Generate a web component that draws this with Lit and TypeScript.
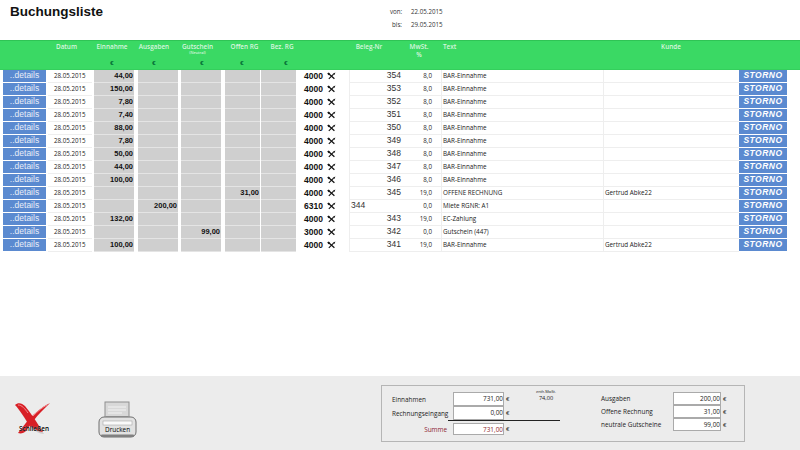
import { LitElement, html, css, svg } from "lit";
import { customElement } from "lit/decorators.js";

type Row = { e?: string; a?: string; g?: string; o?: string; code: string; nr: string; left?: boolean; mw: string; text: string; kunde?: string };
const rows: Row[] = [
  { e: "44,00", code: "4000", nr: "354", mw: "8,0", text: "BAR-Einnahme" },
  { e: "150,00", code: "4000", nr: "353", mw: "8,0", text: "BAR-Einnahme" },
  { e: "7,80", code: "4000", nr: "352", mw: "8,0", text: "BAR-Einnahme" },
  { e: "7,40", code: "4000", nr: "351", mw: "8,0", text: "BAR-Einnahme" },
  { e: "88,00", code: "4000", nr: "350", mw: "8,0", text: "BAR-Einnahme" },
  { e: "7,80", code: "4000", nr: "349", mw: "8,0", text: "BAR-Einnahme" },
  { e: "50,00", code: "4000", nr: "348", mw: "8,0", text: "BAR-Einnahme" },
  { e: "44,00", code: "4000", nr: "347", mw: "8,0", text: "BAR-Einnahme" },
  { e: "100,00", code: "4000", nr: "346", mw: "8,0", text: "BAR-Einnahme" },
  { o: "31,00", code: "4000", nr: "345", mw: "19,0", text: "OFFENE RECHNUNG", kunde: "Gertrud Abke22" },
  { a: "200,00", code: "6310", nr: "344", left: true, mw: "0,0", text: "Miete  RGNR: A1" },
  { e: "132,00", code: "4000", nr: "343", mw: "19,0", text: "EC-Zahlung" },
  { g: "99,00", code: "3000", nr: "342", mw: "0,0", text: "Gutschein (447)" },
  { e: "100,00", code: "4000", nr: "341", mw: "19,0", text: "BAR-Einnahme", kunde: "Gertrud Abke22" },
];

const tools = svg`<svg class="tools" viewBox="0 0 9 8" width="9" height="8"><path d="M2 2 L7.4 6.8" stroke="#111" stroke-width="1.2" fill="none"/><path d="M6.6 2.2 L1.8 6.8" stroke="#111" stroke-width="1.1" fill="none"/><path d="M0.2 1.6 L1.8 0.6 L3.2 2 L1.6 3.2 Z" fill="#111"/><path d="M5.8 1.8 L8.4 0.6 L7.4 3 Z" fill="#111"/></svg>`;

@customElement("app-root")
export class AppRoot extends LitElement {
  static styles = css`
    :host {
      display: flex;
      flex-direction: column;
      width: 800px;
      height: 450px;
      overflow: hidden;
      background: #fff;
      font-family: "Open Sans", "Noto Sans", sans-serif;
      --cols: 46px 46px 42px 44px 43px 39px 36px 31px 10px 12px 54px 38px 162px 136px 48px;
    }
    .top { height: 40px; display: flex; flex: none; }
    h1 { margin: 4px 0 0 10px; width: 380px; font: bold 13.5px/16px "Liberation Sans", sans-serif; color: #111; }
    .dates { margin-top: 7px; display: grid; grid-template-columns: 12px auto; column-gap: 9px; row-gap: 4px; font-size: 6.2px; line-height: 9px; color: #333; align-content: start; white-space: nowrap; }
    .dates span:nth-child(odd) { text-align: right; }
    .head { flex: none; height: 30px; background: #3ad964; border-top: 1px solid #2fc455; border-bottom: 1px solid #34cf5c; box-sizing: border-box; display: grid; grid-template-columns: var(--cols); color: #d8f6df; font-size: 6.4px; font-weight: 600; line-height: 8px; text-align: center; }
    .head > div { padding-top: 2px; display: flex; flex-direction: column; align-items: center; white-space: nowrap; }
    .head small { font-size: 3.8px; line-height: 4px; }
    .head b { color: #063; font: bold 6px/8px "Liberation Sans", sans-serif; margin-top: auto; margin-bottom: 2px; }
    .head .hd { padding-right: 5px; }
    .head .he { padding-right: 2px; }
    .head .ha { padding-right: 4px; }
    .head .hg { padding-right: 4px; }
    .head .hg b { padding-left: 9px; }
    .head .ho { padding-left: 8px; }
    .head .ho b { padding-right: 5px; }
    .head .hb { padding-left: 8px; }
    .head .hb b { padding-left: 8px; }
    .head .hn { padding-right: 14px; }
    .head .hm { padding-right: 6px; }
    .head .htx { align-items: flex-start; padding-left: 2px; }
    .list { flex: none; height: 182px; }
    .row { height: 13px; display: grid; grid-template-columns: var(--cols); }
    .row > * { box-sizing: border-box; min-width: 0; white-space: nowrap; }
    .det { margin-left: 3px; background: #5b8ad0; color: #e8eef8; font: 8.5px/11px "Liberation Sans", sans-serif; text-align: center; border-bottom: 1px solid #fff; }
    .date { margin-left: 2px; font-size: 6.2px; line-height: 11px; padding-left: 6px; color: #222; border-bottom: 1px solid #eee; }
    .num { background: #cfcfcf; font: bold 7.5px/11px "Liberation Sans", sans-serif; text-align: right; padding-right: 1px; color: #111; border-bottom: 1px solid #e4e4e4; }
    .c-e { margin-left: 2px; }
    .c-a { margin-left: 4px; }
    .c-g { margin-left: 3px; }
    .c-o { margin-left: 4px; }
    .c-b { margin-left: 1px; }
    .code { font: bold 8.5px/12px "Liberation Sans", sans-serif; color: #111; padding-left: 8px; }
    .ic { padding-top: 2px; }
    .tools { display: block; }
    .nr { font: 8.5px/11px "Liberation Sans", sans-serif; color: #333; text-align: right; padding-right: 2px; border-bottom: 1px solid #eee; border-left: 1px solid #eee; }
    .nr.left { text-align: left; padding-left: 1px; }
    .mw { font-size: 6.2px; line-height: 11px; text-align: right; color: #222; padding-right: 9px; border-bottom: 1px solid #eee; }
    .tx, .ku { font-size: 6.3px; line-height: 11px; color: #222; padding-left: 1px; border-bottom: 1px solid #eee; border-left: 1px solid #eee; }
    .st { background: #5b8ad0; color: #fff; font: italic bold 8.5px/11px "Liberation Sans", sans-serif; letter-spacing: 0.5px; text-align: center; border-bottom: 1px solid #fff; }
    .spacer { flex: 1; }
    .foot { flex: none; height: 74px; background: #ececec; display: flex; position: relative; }
    .close { margin: 26px 0 0 14px; width: 38px; height: 34px; position: relative; flex: none; }
    .close svg { display: block; }
    .close span, .print span { position: absolute; font-size: 6.4px; line-height: 8px; color: #000; white-space: nowrap; }
    .close span { left: 5px; top: 23px; font-weight: 600; text-shadow: 0 0 1px rgba(255, 255, 255, 0.8); }
    .print { margin: 25px 0 0 46px; width: 40px; height: 38px; position: relative; flex: none; }
    .print span { left: 7px; top: 25px; }
    .panel { margin: 9px 0 0 243px; width: 364px; height: 57px; box-sizing: border-box; border: 1px solid #b5b5b5; padding: 6px 0 0 10px; display: flex; font-size: 6.4px; color: #222; flex: none; position: relative; }
    .block-l { display: grid; grid-template-columns: 61px 51px 10px; grid-template-rows: 14px 14px 12px; row-gap: 0; align-items: center; }
    .block-l .lab.sum { margin-top: 6px; }
    .block-l .val.sum, .block-l .eu.s { margin-top: 6px; }
    .block-r { margin-left: 87px; display: grid; grid-template-columns: 72px 48px 10px; grid-template-rows: 13px 13px 13px; align-items: center; }
    .lab { white-space: nowrap; }
    .val { background: #fff; border: 1px solid #aaa; height: 100%; box-sizing: border-box; text-align: right; line-height: 11px; }
    .eu { font-size: 6px; padding-left: 2px; }
    .mw2 { position: absolute; left: 144px; top: 3px; width: 40px; text-align: center; font-size: 5.6px; line-height: 8px; }
    .mw2 small { font-size: 3.8px; display: block; line-height: 5px; }
    .sum { color: #8c1c2c; }
    .lab.sum { text-align: right; padding-right: 6px; }
    .rule { position: absolute; left: 66px; top: 34px; width: 112px; height: 1px; background: #222; }
  `;

  private num(cls: string, v?: string) {
    return html`<div class="num ${cls}">${v ?? ""}</div>`;
  }

  render() {
    return html`
      <div class="top">
        <h1>Buchungsliste</h1>
        <div class="dates"><span>von:</span><span>22.05.2015</span><span>bis:</span><span>29.05.2015</span></div>
      </div>
      <div class="head">
        <div></div>
        <div class="hd">Datum</div>
        <div class="he">Einnahme<b>€</b></div>
        <div class="ha">Ausgaben<b>€</b></div>
        <div class="hg">Gutschein<small>(Neutral)</small><b>€</b></div>
        <div class="ho">Offen RG<b>€</b></div>
        <div class="hb">Bez. RG<b>€</b></div>
        <div></div><div></div><div></div>
        <div class="hn">Beleg-Nr</div>
        <div class="hm">MwSt.<span>%</span></div>
        <div class="htx">Text</div>
        <div>Kunde</div>
        <div></div>
      </div>
      <div class="list">
        ${rows.map((r) => html`<div class="row">
          <div class="det">..details</div>
          <div class="date">28.05.2015</div>
          ${this.num("c-e", r.e)}${this.num("c-a", r.a)}${this.num("c-g", r.g)}${this.num("c-o", r.o)}${this.num("c-b")}
          <div class="code">${r.code}</div>
          <div class="ic">${tools}</div>
          <div></div>
          <div class="nr ${r.left ? "left" : ""}">${r.nr}</div>
          <div class="mw">${r.mw}</div>
          <div class="tx">${r.text}</div>
          <div class="ku">${r.kunde ?? ""}</div>
          <div class="st">STORNO</div>
        </div>`)}
      </div>
      <div class="spacer"></div>
      <div class="foot">
        <div class="close">
          <svg viewBox="0 0 38 34" width="38" height="34">
            <path d="M3 5 C6 3 9 4 12 7 C17 13 23 22 30 32 C26 32 21 29 17 26 C12 19 7 10 3 5 Z" fill="#a9a9a9" opacity=".5"/>
            <path d="M1 3 C4 0 8 1 11 4 C16 10 22 19 29 30 C25 30 20 27 16 24 C11 17 6 8 1 3 Z" fill="#d81f26"/>
            <path d="M36 1 C28 5 21 11 15 17 C11 22 7 27 4 31 C7 32 10 31 12 29 C17 22 22 15 27 10 C30 7 33 4 36 1 Z" fill="#d81f26"/>
            <path d="M4 3 C8 3 11 7 14 11 M19 14 C24 9 29 5 33 3" stroke="#f28a8e" stroke-width="1" fill="none"/>
          </svg>
          <span>Schließen</span>
        </div>
        <div class="print">
          <svg viewBox="0 0 40 38" width="40" height="38">
            <rect x="7" y="1" width="24" height="20" fill="#d8d8d8" stroke="#8e8e8e"/>
            <path d="M10 6h18M10 9h18M10 12h14" stroke="#f2f2f2" stroke-width="1"/>
            <rect x="8" y="15" width="22" height="6" fill="#aaa"/>
            <rect x="1" y="16" width="37" height="20" rx="5" fill="#e2e2e2" stroke="#6f6f6f"/>
            <rect x="5" y="20" width="29" height="4" fill="#fafafa" stroke="#9a9a9a" stroke-width=".5"/>
            <rect x="3" y="33.5" width="33" height="2.5" rx="1" fill="#808080"/>
          </svg>
          <span>Drucken</span>
        </div>
        <div class="panel">
          <div class="block-l">
            <div class="lab">Einnahmen</div><div class="val">731,00</div><div class="eu">€</div>
            <div class="lab">Rechnungseingang</div><div class="val">0,00</div><div class="eu">€</div>
            <div class="lab sum">Summe</div><div class="val sum">731,00</div><div class="eu s">€</div>
          </div>
          <div class="mw2"><small>enth.MwSt.</small>74,00</div>
          <div class="rule"></div>
          <div class="block-r">
            <div class="lab">Ausgaben</div><div class="val">200,00</div><div class="eu">€</div>
            <div class="lab">Offene Rechnung</div><div class="val">31,00</div><div class="eu">€</div>
            <div class="lab">neutrale Gutscheine</div><div class="val">99,00</div><div class="eu">€</div>
          </div>
        </div>
      </div>
    `;
  }
}
